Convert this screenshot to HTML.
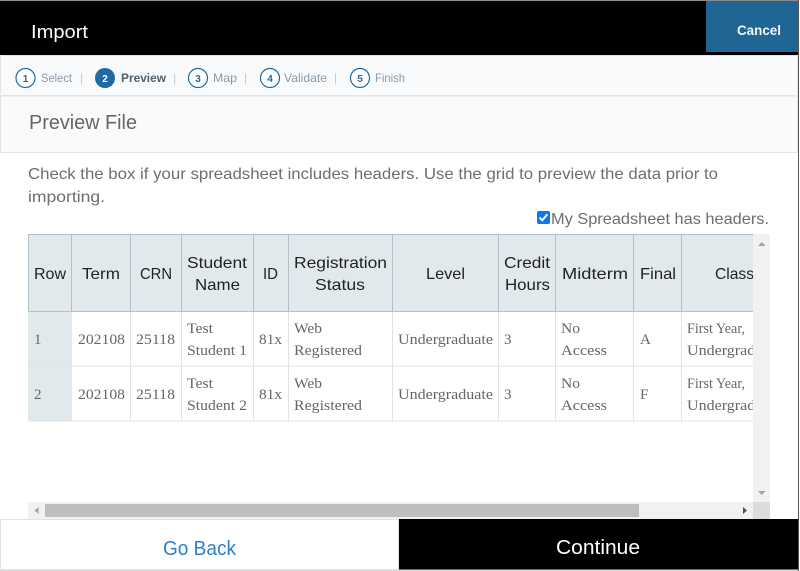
<!DOCTYPE html>
<html lang="en">
<head>
<meta charset="utf-8">
<title>Import</title>
<style>
html,body{margin:0;padding:0;background:#fff;width:800px;height:571px;overflow:hidden}
svg{display:block}
text{font-family:"Liberation Sans",sans-serif}
.s{font-family:"Liberation Serif",serif;font-size:15px;fill:#666}
.h{font-size:16px;fill:#222;}
.st{font-size:12px;fill:#8c99a5}
.n{font-size:10px;font-weight:700;fill:#1f6aa5;text-anchor:middle}
.p{font-size:12px;fill:#c4c9cd}
</style>
</head>
<body>
<svg width="800" height="571" viewBox="0 0 800 571" xmlns="http://www.w3.org/2000/svg">
<defs><clipPath id="c"><rect x="28" y="234" width="725" height="269"/></clipPath></defs>
<rect width="800" height="571" fill="#fff"/>
<!-- header -->
<rect x="0" y="0" width="798" height="55" fill="#000"/>
<rect x="0" y="0" width="798" height="1" fill="#8a8a8a"/>
<rect x="706" y="1" width="92" height="51" fill="#1f6695"/>
<text x="31" y="38" font-size="18" fill="#fff" textLength="57" lengthAdjust="spacingAndGlyphs">Import</text>
<text x="737" y="35" font-size="14" font-weight="700" fill="#f2f6f9" textLength="44" lengthAdjust="spacingAndGlyphs">Cancel</text>
<rect x="798" y="0" width="1" height="571" fill="#555"/>
<!-- steps -->
<rect x="0.5" y="55.5" width="797" height="40" rx="2" fill="#f9fafb" stroke="#e2e4e6"/>
<g fill="#fff" stroke="#1f6aa5" stroke-width="1.2">
<circle cx="25.5" cy="78" r="9.5"/>
<circle cx="198" cy="78" r="9.5"/>
<circle cx="270" cy="78" r="9.5"/>
<circle cx="360" cy="78" r="9.5"/>
</g>
<circle cx="105" cy="78" r="10" fill="#1f6aa5"/>
<text class="n" x="25.5" y="82">1</text>
<text class="n" x="105" y="82" style="fill:#fff">2</text>
<text class="n" x="198" y="82">3</text>
<text class="n" x="270" y="82">4</text>
<text class="n" x="360" y="82">5</text>
<text class="st" x="41" y="82" textLength="31" lengthAdjust="spacingAndGlyphs">Select</text>
<text class="p" x="80" y="82">|</text>
<text class="st" x="121" y="82" style="font-weight:700;fill:#4f5f6e" textLength="45" lengthAdjust="spacingAndGlyphs">Preview</text>
<text class="p" x="173" y="82">|</text>
<text class="st" x="213" y="82" textLength="24" lengthAdjust="spacingAndGlyphs">Map</text>
<text class="p" x="244" y="82">|</text>
<text class="st" x="284" y="82" textLength="43" lengthAdjust="spacingAndGlyphs">Validate</text>
<text class="p" x="334" y="82">|</text>
<text class="st" x="375" y="82" textLength="30" lengthAdjust="spacingAndGlyphs">Finish</text>
<!-- section title -->
<rect x="0.5" y="96" width="797" height="56.5" fill="#f9fafb" stroke="#e2e4e6"/>
<text x="29" y="129" font-size="20" fill="#666" textLength="108" lengthAdjust="spacingAndGlyphs">Preview File</text>
<!-- description -->
<text x="28" y="179" font-size="16" fill="#6e6e6e" textLength="690" lengthAdjust="spacingAndGlyphs">Check the box if your spreadsheet includes headers. Use the grid to preview the data prior to</text>
<text x="28" y="202" font-size="16" fill="#6e6e6e" textLength="77" lengthAdjust="spacingAndGlyphs">importing.</text>
<rect x="537" y="211" width="13" height="13" rx="2" fill="#0b76f0"/>
<path d="M539.5 217.5l2.7 2.8 5.2-6" fill="none" stroke="#fff" stroke-width="2"/>
<text x="551" y="224" font-size="16" fill="#6e6e6e" textLength="218" lengthAdjust="spacingAndGlyphs">My Spreadsheet has headers.</text>
<!-- table -->
<g clip-path="url(#c)">
<rect x="28" y="234" width="725" height="77" fill="#e2e9ec"/>
<rect x="28" y="311" width="44" height="110" fill="#e2e9ec"/>
<g fill="#e3e3e3">
<rect x="28" y="365.5" width="725" height="1"/>
<rect x="28" y="420.5" width="725" height="1"/>
<rect x="130" y="311" width="1" height="110"/>
<rect x="181" y="311" width="1" height="110"/>
<rect x="253" y="311" width="1" height="110"/>
<rect x="288" y="311" width="1" height="110"/>
<rect x="392" y="311" width="1" height="110"/>
<rect x="498" y="311" width="1" height="110"/>
<rect x="555" y="311" width="1" height="110"/>
<rect x="633" y="311" width="1" height="110"/>
<rect x="681" y="311" width="1" height="110"/>
</g>
<g fill="#b4c0c6">
<rect x="28" y="234" width="725" height="1"/>
<rect x="28" y="311" width="725" height="1"/>
<rect x="28" y="234" width="1" height="77"/>
<rect x="71" y="234" width="1" height="77"/>
<rect x="130" y="234" width="1" height="77"/>
<rect x="181" y="234" width="1" height="77"/>
<rect x="253" y="234" width="1" height="77"/>
<rect x="288" y="234" width="1" height="77"/>
<rect x="392" y="234" width="1" height="77"/>
<rect x="498" y="234" width="1" height="77"/>
<rect x="555" y="234" width="1" height="77"/>
<rect x="633" y="234" width="1" height="77"/>
<rect x="681" y="234" width="1" height="77"/>
</g>
<text class="h" x="34" y="279" textLength="32" lengthAdjust="spacingAndGlyphs">Row</text>
<text class="h" x="82" y="279" textLength="38" lengthAdjust="spacingAndGlyphs">Term</text>
<text class="h" x="140" y="279" textLength="32" lengthAdjust="spacingAndGlyphs">CRN</text>
<text class="h" x="187" y="268" textLength="60" lengthAdjust="spacingAndGlyphs">Student</text>
<text class="h" x="195" y="290" textLength="45" lengthAdjust="spacingAndGlyphs">Name</text>
<text class="h" x="263" y="279" textLength="15" lengthAdjust="spacingAndGlyphs">ID</text>
<text class="h" x="294" y="268" textLength="93" lengthAdjust="spacingAndGlyphs">Registration</text>
<text class="h" x="315" y="290" textLength="50" lengthAdjust="spacingAndGlyphs">Status</text>
<text class="h" x="426" y="279" textLength="39" lengthAdjust="spacingAndGlyphs">Level</text>
<text class="h" x="504" y="268" textLength="46" lengthAdjust="spacingAndGlyphs">Credit</text>
<text class="h" x="505" y="290" textLength="45" lengthAdjust="spacingAndGlyphs">Hours</text>
<text class="h" x="562" y="279" textLength="66" lengthAdjust="spacingAndGlyphs">Midterm</text>
<text class="h" x="640" y="279" textLength="36" lengthAdjust="spacingAndGlyphs">Final</text>
<text class="h" x="715" y="279" textLength="39" lengthAdjust="spacingAndGlyphs">Class</text>

<text class="s" x="34" y="344">1</text>
<text class="s" x="78" y="344" textLength="47" lengthAdjust="spacingAndGlyphs">202108</text>
<text class="s" x="136" y="344" textLength="39" lengthAdjust="spacingAndGlyphs">25118</text>
<text class="s" x="187" y="333" textLength="26" lengthAdjust="spacingAndGlyphs">Test</text>
<text class="s" x="187" y="355" textLength="60" lengthAdjust="spacingAndGlyphs">Student 1</text>
<text class="s" x="259" y="344" textLength="23" lengthAdjust="spacingAndGlyphs">81x</text>
<text class="s" x="294" y="333" textLength="28" lengthAdjust="spacingAndGlyphs">Web</text>
<text class="s" x="294" y="355" textLength="68" lengthAdjust="spacingAndGlyphs">Registered</text>
<text class="s" x="398" y="344" textLength="95" lengthAdjust="spacingAndGlyphs">Undergraduate</text>
<text class="s" x="504" y="344">3</text>
<text class="s" x="561" y="333" textLength="19" lengthAdjust="spacingAndGlyphs">No</text>
<text class="s" x="561" y="355" textLength="46" lengthAdjust="spacingAndGlyphs">Access</text>
<text class="s" x="640" y="344">A</text>
<text class="s" x="687" y="333" textLength="58" lengthAdjust="spacingAndGlyphs">First Year,</text>
<text class="s" x="687" y="355" textLength="95" lengthAdjust="spacingAndGlyphs">Undergraduate</text>

<text class="s" x="34" y="399">2</text>
<text class="s" x="78" y="399" textLength="47" lengthAdjust="spacingAndGlyphs">202108</text>
<text class="s" x="136" y="399" textLength="39" lengthAdjust="spacingAndGlyphs">25118</text>
<text class="s" x="187" y="388" textLength="26" lengthAdjust="spacingAndGlyphs">Test</text>
<text class="s" x="187" y="410" textLength="60" lengthAdjust="spacingAndGlyphs">Student 2</text>
<text class="s" x="259" y="399" textLength="23" lengthAdjust="spacingAndGlyphs">81x</text>
<text class="s" x="294" y="388" textLength="28" lengthAdjust="spacingAndGlyphs">Web</text>
<text class="s" x="294" y="410" textLength="68" lengthAdjust="spacingAndGlyphs">Registered</text>
<text class="s" x="398" y="399" textLength="95" lengthAdjust="spacingAndGlyphs">Undergraduate</text>
<text class="s" x="504" y="399">3</text>
<text class="s" x="561" y="388" textLength="19" lengthAdjust="spacingAndGlyphs">No</text>
<text class="s" x="561" y="410" textLength="46" lengthAdjust="spacingAndGlyphs">Access</text>
<text class="s" x="640" y="399">F</text>
<text class="s" x="687" y="388" textLength="58" lengthAdjust="spacingAndGlyphs">First Year,</text>
<text class="s" x="687" y="410" textLength="95" lengthAdjust="spacingAndGlyphs">Undergraduate</text>
</g>
<!-- scrollbars -->
<rect x="753" y="234" width="17" height="269" fill="#f1f1f1"/>
<rect x="28" y="502" width="725" height="17" fill="#f1f1f1"/>
<rect x="753" y="502" width="17" height="17" fill="#dcdcdc"/>
<rect x="45" y="504" width="594" height="13" fill="#bebebe"/>
<path d="M758 246h7.500l-3.750-4z" fill="#a3a3a3"/>
<path d="M758 491h7.500l-3.750 4z" fill="#a3a3a3"/>
<path d="M38.500 507v7l-4-3.500z" fill="#a3a3a3"/>
<path d="M743 507v7l4-3.500z" fill="#505050"/>
<!-- footer -->
<rect x="0.500" y="519.500" width="398" height="50" fill="#fff" stroke="#e2e2e2"/>
<rect x="399" y="519" width="399" height="51" fill="#000"/>
<rect x="0" y="569.500" width="798" height="1.500" fill="#dedede"/>
<text x="163" y="555" font-size="20" fill="#2a80cc" textLength="73" lengthAdjust="spacingAndGlyphs">Go Back</text>
<text x="556" y="554" font-size="20" fill="#fff" textLength="84" lengthAdjust="spacingAndGlyphs">Continue</text>
</svg>
</body>
</html>
